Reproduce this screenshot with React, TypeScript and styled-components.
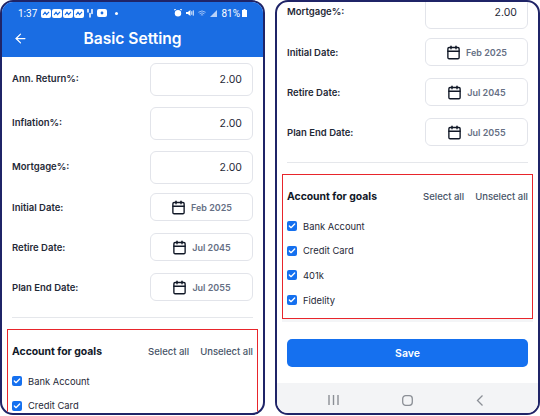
import styled, {createGlobalStyle} from 'styled-components';
import {ArrowLeft, Calendar, Check} from 'lucide-react';

const GlobalStyle = createGlobalStyle`
    html, body {
        margin: 0;
        padding: 0;
        background: #ffffff;
    }
    * {
        box-sizing: border-box;
    }
`

const numberFields = ['Ann. Return%:', 'Inflation%:', 'Mortgage%:'];

const dateFields = [
    {label: 'Initial Date:', value: 'Feb 2025'},
    {label: 'Retire Date:', value: 'Jul 2045'},
    {label: 'Plan End Date:', value: 'Jul 2055'},
];

const accounts = ['Bank Account', 'Credit Card', '401k', 'Fidelity'];

const AppIcon = () => (
    <svg width="10" height="9" viewBox="0 0 10 9">
        <rect width="10" height="9" rx="2" fill="#fff" />
        <path d="M2 6 L4 3.2 L5.6 5.6 L8 2.8" stroke="#1a6de3" strokeWidth="1.2" fill="none" />
    </svg>
);

const StatusBar = () => (
    <Status>
        <StatusGroup>
            <span>1:37</span>
            <AppIcons>
                <AppIcon />
                <AppIcon />
                <AppIcon />
                <AppIcon />
                <TalkIcon width="6" height="9" viewBox="0 0 6 9">
                    <path d="M1 0.5 V3 M3 4.5 V8 M5 0.5 V4.5" stroke="#fff" strokeWidth="1.5" strokeLinecap="round" />
                </TalkIcon>
                <TubeIcon width="10" height="8" viewBox="0 0 10 8">
                    <rect width="10" height="8" rx="2" fill="#fff" />
                    <circle cx="5" cy="4" r="1.4" fill="#1a6de3" />
                </TubeIcon>
                <StatusDot />
            </AppIcons>
        </StatusGroup>
        <StatusGroup>
            <SystemIcons>
                <svg width="8" height="8" viewBox="0 0 8 8">
                    <circle cx="4" cy="4.2" r="3.2" fill="#fff" />
                    <path d="M0 1 L2 0 M8 1 L6 0" stroke="#fff" />
                </svg>
                <svg width="8" height="8" viewBox="0 0 9 8">
                    <path d="M0 3 H2 L5 0.5 V7.5 L2 5 H0 Z" fill="#fff" />
                    <path d="M6.5 2 V6 M8.2 1 V7" stroke="#fff" />
                </svg>
                <svg width="8" height="7" viewBox="0 0 10 8">
                    <path d="M0.5 2.5 Q5 -1 9.5 2.5 M2 4.3 Q5 2 8 4.3 M3.5 6 Q5 5 6.5 6" stroke="#cfe0fb" strokeWidth="0.9" fill="none" />
                </svg>
                <svg width="7" height="7" viewBox="0 0 8 8">
                    <path d="M8 0 V8 H0 Z" fill="#b9d2f8" />
                </svg>
            </SystemIcons>
            <span>81%</span>
            <svg width="5" height="8" viewBox="0 0 5 8">
                <path d="M1.5 0 H3.5 V1 H5 V8 H0 V1 H1.5 Z" fill="#fff" />
            </svg>
        </StatusGroup>
    </Status>
);

const SettingsRows = () => (
    <>
        <NumberRows>
            {numberFields.map(label => (
                <Row key={label}>
                    <NumberLabel>{label}</NumberLabel>
                    <NumberInput>2.00</NumberInput>
                </Row>
            ))}
        </NumberRows>
        <DateRows>
            {dateFields.map(({label, value}) => (
                <Row key={label}>
                    <Label>{label}</Label>
                    <DateButton>
                        <Calendar size={15} strokeWidth={2.2} color="#111827" />
                        {value}
                    </DateButton>
                </Row>
            ))}
        </DateRows>
        <Divider />
    </>
);

const GoalsBox = () => (
    <Goals>
        <GoalsHeader>
            <GoalsTitle>Account for goals</GoalsTitle>
            <GoalsActions>
                <span>Select all</span>
                <span>Unselect all</span>
            </GoalsActions>
        </GoalsHeader>
        <AccountList>
            {accounts.map(name => (
                <Account key={name}>
                    <CheckBox>
                        <Check size={8} strokeWidth={4} color="#fff" />
                    </CheckBox>
                    {name}
                </Account>
            ))}
        </AccountList>
    </Goals>
);

const App = () => (
    <Page>
        <GlobalStyle />
        <Phone>
            <Header>
                <StatusBar />
                <TitleBar>
                    <BackButton>
                        <ArrowLeft size={15} strokeWidth={2} color="#fff" />
                    </BackButton>
                    <Title>Basic Setting</Title>
                </TitleBar>
            </Header>
            <Content $top={6}>
                <SettingsRows />
                <GoalsBox />
            </Content>
        </Phone>
        <Phone>
            <Scroller>
                <Content $top={-94}>
                    <SettingsRows />
                    <GoalsBox />
                </Content>
            </Scroller>
            <SaveArea>
                <SaveButton>Save</SaveButton>
            </SaveArea>
            <NavBar>
                <svg width="11" height="10" viewBox="0 0 11 10">
                    <path d="M1 0 V10 M5.5 0 V10 M10 0 V10" stroke="#8b8f96" strokeWidth="1.4" />
                </svg>
                <svg width="11" height="11" viewBox="0 0 11 11">
                    <rect x="0.7" y="0.7" width="9.6" height="9.6" rx="3" stroke="#8b8f96" strokeWidth="1.3" fill="none" />
                </svg>
                <svg width="8" height="11" viewBox="0 0 8 11">
                    <path d="M6.5 0.5 L1.5 5.5 L6.5 10.5" stroke="#8b8f96" strokeWidth="1.3" fill="none" />
                </svg>
            </NavBar>
        </Phone>
    </Page>
)

const Page = styled.div`
    display: flex;
    gap: 10px;
    width: 540px;
    height: 416px;
    overflow: hidden;
    font-family: Inter, "Liberation Sans", sans-serif;
`

const Phone = styled.div`
    flex: 0 0 265px;
    display: flex;
    flex-direction: column;
    height: 415px;
    background: #ffffff;
    border: 2px solid #1f2467;
    border-radius: 13px;
    overflow: hidden;
`

const Header = styled.div`
    flex: none;
    height: 55px;
    background: #1a6de3;
    color: #ffffff;
`

const Status = styled.div`
    display: flex;
    justify-content: space-between;
    align-items: center;
    height: 22px;
    padding: 0 16px;
    font-family: Roboto, sans-serif;
    font-size: 10px;
`

const StatusGroup = styled.div`
    display: flex;
    align-items: center;
    gap: 2px;
`

const AppIcons = styled.div`
    display: flex;
    align-items: center;
    gap: 1px;
    margin-left: 2px;
`

const TalkIcon = styled.svg`
    margin-left: 2px;
`

const TubeIcon = styled.svg`
    margin-left: 3px;
`

const SystemIcons = styled.div`
    display: flex;
    align-items: center;
    gap: 4px;
    margin-right: 2px;
`

const StatusDot = styled.i`
    width: 3px;
    height: 3px;
    margin-left: 7px;
    border-radius: 50%;
    background: #ffffff;
`

const TitleBar = styled.div`
    position: relative;
    display: flex;
    justify-content: center;
    align-items: center;
    height: 29px;
`

const BackButton = styled.div`
    position: absolute;
    top: 7px;
    left: 11px;
    display: flex;
`

const Title = styled.div`
    font-size: 15.6px;
    font-weight: 600;
`

const Scroller = styled.div`
    flex: none;
    height: 337px;
    overflow: hidden;
`

const Content = styled.div<{$top: number}>`
    display: flex;
    flex-direction: column;
    margin-top: ${props => props.$top}px;
    padding: 0 10px;
`

const NumberRows = styled.div`
    display: flex;
    flex-direction: column;
    gap: 11px;
`

const DateRows = styled.div`
    display: flex;
    flex-direction: column;
    gap: 12px;
    margin-top: 9px;
`

const Row = styled.div`
    display: flex;
    justify-content: space-between;
    align-items: center;
`

const Label = styled.div`
    font-size: 9.5px;
    font-weight: 600;
    color: #1f2937;
`

const NumberLabel = styled(Label)`
    padding-bottom: 3px;
`

const NumberInput = styled.div`
    width: 103px;
    height: 33px;
    padding-right: 10px;
    border: 1px solid #e2e4ea;
    border-radius: 6px;
    font-size: 10.5px;
    line-height: 31px;
    text-align: right;
    color: #1f2937;
`

const DateButton = styled.div`
    display: flex;
    justify-content: center;
    align-items: center;
    gap: 5px;
    width: 103px;
    height: 28px;
    border: 1px solid #e2e4ea;
    border-radius: 6px;
    font-size: 9px;
    font-weight: 600;
    color: #667085;
`

const Divider = styled.div`
    height: 1px;
    margin-top: 16px;
    background: #e5e7eb;
`

const Goals = styled.div`
    flex: none;
    height: 145px;
    margin: 11px -5px 0;
    padding: 0 4px;
    border: 1px solid #e8252b;
    box-shadow: 0 3px 0 #f4f5f7;
`

const GoalsHeader = styled.div`
    display: flex;
    justify-content: space-between;
    align-items: center;
    height: 43px;
`

const GoalsTitle = styled.div`
    font-size: 10.4px;
    font-weight: 700;
    color: #111827;
`

const GoalsActions = styled.div`
    display: flex;
    gap: 11px;
    font-size: 9.5px;
    font-weight: 500;
    color: #475467;
`

const AccountList = styled.div`
    display: flex;
    flex-direction: column;
    gap: 8.7px;
`

const Account = styled.div`
    display: flex;
    align-items: center;
    gap: 6px;
    height: 16px;
    font-size: 9.4px;
    color: #1f2937;
`

const CheckBox = styled.div`
    display: flex;
    justify-content: center;
    align-items: center;
    width: 10px;
    height: 10px;
    border-radius: 2px;
    background: #1570ef;
`

const SaveArea = styled.div`
    flex: 1;
    padding: 0 10px;
`

const SaveButton = styled.div`
    height: 28px;
    border-radius: 5px;
    background: #1570ef;
    color: #ffffff;
    font-size: 10.5px;
    font-weight: 600;
    line-height: 29px;
    text-align: center;
`

const NavBar = styled.div`
    flex: none;
    display: flex;
    justify-content: space-between;
    align-items: center;
    height: 30px;
    padding: 4px 54px 0 51px;
    background: #f3f4f6;
`

export default App;
